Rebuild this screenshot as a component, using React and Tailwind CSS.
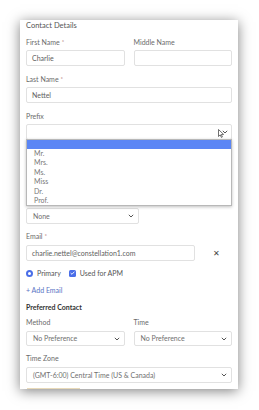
const font = { fontFamily: 'Lato, "Open Sans", sans-serif' };

const Chevron = () => (
  <svg width="6" height="4" viewBox="0 0 6 4" className="shrink-0">
    <path d="M0.8 0.8 L3 3 L5.2 0.8" fill="none" stroke="#555" strokeWidth="1" />
  </svg>
);

const Label = ({ children, req, className = "" }) => (
  <div className={`h-[10px] leading-[10px] text-[7px] text-[#6b6b6b] ${className}`}>
    {children}
    {req && <span className="text-[#a66] text-[6px] ml-[2px] align-top">*</span>}
  </div>
);

const Input = ({ value, className = "" }) => (
  <div className={`h-[16px] border border-[#e1e1e1] rounded-[2px] bg-white flex items-center pl-[5px] text-[7px] text-[#606060] ${className}`}>
    {value}
  </div>
);

const Select = ({ value, className = "" }) => (
  <div className={`border border-[#e1e1e1] rounded-[2px] bg-white flex items-center justify-between pl-[6px] pr-[4px] text-[7px] text-[#707070] ${className}`}>
    <span>{value}</span>
    <Chevron />
  </div>
);

const PREFIXES = ["Mr.", "Mrs.", "Ms.", "Miss", "Dr.", "Prof."];

export default function App() {
  return (
    <div className="w-[259px] h-[410px] bg-white overflow-hidden" style={font}>
      <div className="ml-[20px] mt-[20px] w-[218px] h-[369px] bg-white relative overflow-hidden shadow-[0_2px_12px_rgba(0,0,0,0.5)]">
        <div className="px-[6px]">
          <div className="mt-[1px] h-[10px] leading-[10px] text-[7.5px] text-[#555]">Contact Details</div>

          {/* First / Middle */}
          <div className="mt-[6px] grid grid-cols-2 gap-[9px]">
            <div>
              <Label req>First Name</Label>
              <Input value="Charlie" className="mt-[3px]" />
            </div>
            <div>
              <Label>Middle Name</Label>
              <Input value="" className="mt-[3px]" />
            </div>
          </div>

          <Label req className="mt-[8px]">Last Name</Label>
          <Input value="Nettel" className="mt-[3px]" />

          <Label className="mt-[8px]">Prefix</Label>
          <div className="mt-[3px] h-[16px] border border-[#e1e1e1] rounded-[2px] bg-white flex items-center justify-end pr-[3px] relative">
            <svg width="7" height="9" viewBox="0 0 7 9" className="absolute right-[6px] top-[4px]">
              <path d="M0.5 0.5 L0.5 7.5 L2.2 5.9 L3.4 8.4 L4.4 7.9 L3.3 5.5 L5.6 5.4 Z" fill="#fff" stroke="#333" strokeWidth="0.7" />
            </svg>
            <Chevron />
          </div>

          {/* suffix field, label hidden under the open list */}
          <div className="mt-[55px] h-[10px]" />
          <Select value="None" className="mt-[3px] h-[16px] w-[113px]" />

          <Label req className="mt-[7px]">Email</Label>
          <div className="mt-[4px] flex items-center">
            <Input value="charlie.nettel@constellation1.com" className="w-[169px]" />
            <span className="ml-[18px] text-[8px] text-[#444] leading-none">✕</span>
          </div>

          <div className="mt-[7px] h-[10px] flex items-center text-[7px] text-[#555]">
            <span className="w-[7px] h-[7px] rounded-full border-[2px] border-[#4a6ee8] bg-white" />
            <span className="ml-[4px]">Primary</span>
            <span className="ml-[8px] w-[7px] h-[7px] rounded-[1.5px] bg-[#4a6ee8] flex items-center justify-center">
              <svg width="5" height="4" viewBox="0 0 5 4">
                <path d="M0.6 2 L2 3.3 L4.4 0.7" fill="none" stroke="#fff" strokeWidth="0.9" />
              </svg>
            </span>
            <span className="ml-[4px]">Used for APM</span>
          </div>

          <div className="mt-[7px] h-[10px] leading-[10px] text-[7px] text-[#5a74c4]">+ Add Email</div>

          <div className="mt-[7px] h-[10px] leading-[10px] text-[7px] font-bold text-[#333]">Preferred Contact</div>

          <div className="mt-[5px] grid grid-cols-2 gap-[9px]">
            <div>
              <Label>Method</Label>
              <Select value="No Preference" className="mt-[4px] h-[15px]" />
            </div>
            <div>
              <Label>Time</Label>
              <Select value="No Preference" className="mt-[4px] h-[15px]" />
            </div>
          </div>

          <Label className="mt-[7px]">Time Zone</Label>
          <Select value="(GMT-6:00) Central Time (US & Canada)" className="mt-[4px] h-[16px]" />

          <div className="mt-[5px] ml-[1px] w-[53px] h-[4px] border-t border-[#e8d9b8]" />
        </div>

        {/* Prefix dropdown list */}
        <div className="absolute left-[6px] top-[119px] w-[206px] h-[67px] bg-white border border-[#b8b8b8] shadow-[0_1px_3px_rgba(0,0,0,0.25)]">
          <div className="h-[9px] bg-[#5b86f5]" />
          {PREFIXES.map((p) => (
            <div key={p} className="h-[9.4px] leading-[9.4px] pl-[7px] text-[7px] text-[#777]">
              {p}
            </div>
          ))}
        </div>
      </div>
    </div>
  );
}
